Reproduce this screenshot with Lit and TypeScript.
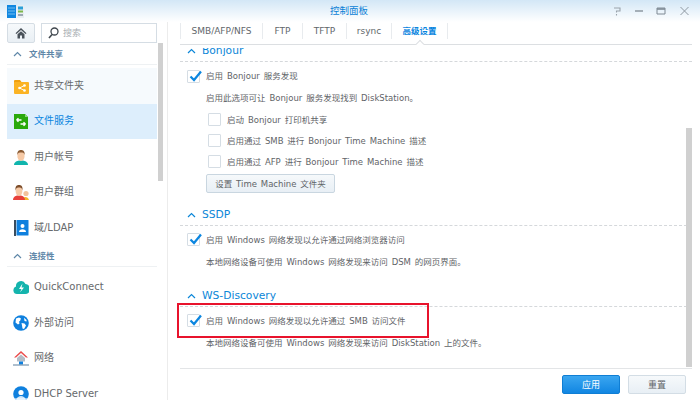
import { LitElement, html, css, svg } from "lit";
import { customElement } from "lit/decorators.js";

const icons: Record<string, unknown> = {
  share: svg`<path d="M1 3a1 1 0 0 1 1-1h5l1.500 2H14a1 1 0 0 1 1 1v10H1z" fill="#f0a010"/><rect x="1" y="4" width="15" height="12" rx="1" fill="#fbb324"/><circle cx="6.500" cy="10" r="1.300" fill="#fff"/><circle cx="11.500" cy="7.500" r="1.300" fill="#fff"/><circle cx="11.500" cy="12.500" r="1.300" fill="#fff"/><path d="M6.500 10l5-2.500M6.500 10l5 2.500" stroke="#fff" stroke-width=".9"/>`,
  file: svg`<path d="M1 1h11l3 3v12H1z" fill="#2aa90c"/><path d="M12 1l3 3h-3z" fill="#8ed67a"/><path d="M3.500 7h5M3.500 7l2-1.800M3.500 7l2 1.800M12.500 11h-5M12.500 11l-2-1.800M12.500 11l-2 1.800" stroke="#fff" stroke-width="1.400" fill="none"/>`,
  user: svg`<path d="M1 16c0-3 3-4 5-4.500h4c2 .5 5 1.500 5 4.500z" fill="#10b5ad"/><ellipse cx="8" cy="7" rx="3.600" ry="5" fill="#f6c9a5"/><path d="M4.300 6C4 2 6 1 8 1s4 1 3.700 5C11 3.500 9.500 3.500 8 3.500S5 3.500 4.300 6z" fill="#8a5a32"/>`,
  group: svg`<path d="M9 16c0-2 2-3 3.500-3s3 1 3.500 3z" fill="#f5b52a"/><circle cx="13" cy="9.500" r="2.600" fill="#f3c39d"/><path d="M0 16c0-3 2.500-4 4-4.500h4c1.500.5 4 1.500 4 4.500z" fill="#e8403a"/><ellipse cx="6" cy="7" rx="3.400" ry="4.800" fill="#f6c9a5"/><path d="M2.500 6.500C2 2 4 1 6 1s4 1 3.500 5.500C9 3.800 7.500 3.600 6 3.600S3 3.800 2.500 6.500z" fill="#7d4d2a"/>`,
  domain: svg`<rect x="1" y="0" width="2" height="16" fill="#3a4c5e"/><rect x="3.500" y="0" width="12" height="15.500" rx=".5" fill="#0f80de"/><circle cx="9.500" cy="6" r="2" fill="#fff"/><path d="M6 12c0-2 1.500-2.800 3.500-2.800S13 10 13 12z" fill="#fff"/>`,
  cloud: svg`<path d="M4 15a3.800 3.800 0 0 1-1-7.400A5 5 0 0 1 12.500 5 4.700 4.700 0 0 1 12 15z" fill="#14b4ad"/><path d="M9.500 4.500L6 10h2.500L7 13.500 11 8.500H8.500z" fill="#fff"/>`,
  globe: svg`<circle cx="8" cy="8" r="7.800" fill="#0f80de"/><path d="M3 3.500l3-1 2 1-1 2.500-1 .5.500 2L5 9.500 2.500 7.500zM8.500 8l3 .5 1.500 2-2 3.500-1.500-.5-.5-3zM11 2.800l2.500 2.200v1.500L11.500 6z" fill="#fff"/>`,
  net: svg`<path d="M8 1L1 7.500h2L8 3l5 4.500h2z" fill="#ea4b4b"/><path d="M4 8l4-3.500L12 8v3.500H4z" fill="#b3bcc6"/><rect x="6" y="11.500" width="4" height="3" fill="#0f80de"/><path d="M0 15h16" stroke="#5d7f9c" stroke-width="1"/>`,
  dhcp: svg`<circle cx="8" cy="8" r="7.800" fill="#0f80de"/><circle cx="8" cy="6.500" r="2.600" fill="#fff"/><path d="M3 14c1-3 3-4 5-4s4 1 5 4z" fill="#cfe6fa"/><path d="M2 13h12" stroke="#fff"/>`,
};

const nav = [
  { t: "h", l: "文件共享" },
  { t: "i", l: "共享文件夹", i: "share" },
  { t: "i", l: "文件服务", i: "file", on: true },
  { t: "i", l: "用户帐号", i: "user" },
  { t: "i", l: "用户群组", i: "group" },
  { t: "i", l: "域/LDAP", i: "domain" },
  { t: "h", l: "连接性" },
  { t: "i", l: "QuickConnect", i: "cloud" },
  { t: "i", l: "外部访问", i: "globe" },
  { t: "i", l: "网络", i: "net" },
  { t: "i", l: "DHCP Server", i: "dhcp" },
];

const tabs = ["SMB/AFP/NFS", "FTP", "TFTP", "rsync", "高级设置"];

@customElement("app-root")
export class AppRoot extends LitElement {
  static styles = css`
    :host { display: block; width: 700px; height: 400px; overflow: hidden; }
    * { box-sizing: border-box; }
    .win { position: relative; width: 700px; height: 400px; background: #fff; display: flex; flex-direction: column; color: #5f6468;
      font: 8.500px/14px "DejaVu Sans", "Noto Sans CJK SC", sans-serif; word-spacing: 1.200px; }
    .bar { flex: none; height: 22px; display: grid; grid-template-columns: 1fr auto 1fr; align-items: center; padding: 0 9px 0 7px;
      background: linear-gradient(#d3e7f6, #ffffff); }
    .title { color: #0b7fd6; font-size: 9.500px; }
    .logo { display: block; }
    .ctl { justify-self: end; display: flex; align-items: center; margin-right: 1px; }
    .c1 { margin-left: 12px; } .c2 { margin-left: 10px; } .c3 { margin-left: 12px; }
    .main { flex: 1; display: flex; min-height: 0; }
    .side { flex: none; width: 168px; padding-left: 7px; display: flex; border-right: 1px solid #ececec; }
    .col { flex: none; width: 150px; display: flex; flex-direction: column; overflow: hidden; }
    .tools { flex: none; display: flex; gap: 6px; height: 21px; margin-top: 1px; }
    .home { width: 28px; height: 20px; border: 1px solid #d5dde4; border-radius: 2px; background: linear-gradient(#f6f9fb, #e9eff4); display: flex; align-items: center; justify-content: center; }
    .search { width: 116px; height: 20px; border: 1px solid #d5dde4; display: flex; align-items: center; gap: 4px; padding-left: 6px; color: #a9afb4; font-size: 9px; }
    .shead { flex: none; height: 21px; display: flex; align-items: center; gap: 7px; padding-left: 6px; color: #5f87a8; font-weight: 700; font-size: 8.500px; border-bottom: 1px solid #eef1f3; }
    .shead.gap { height: 21.500px; padding-top: 1px; }
    .item { flex: none; height: 35.500px; display: flex; align-items: center; gap: 5px; padding-left: 6px; font-size: 10px; color: #66696c; word-spacing: 0; }
    .item.on { background: #ddeefc; color: #0b86e0; }
    .item svg { flex: none; }
    .item.first { margin-top: 3px; background: #f6fafd; }
    .item.after { margin-top: 2.500px; }
    .rail { flex: none; width: 5px; margin-left: 1px; }
    .thumb { width: 5px; height: 138px; margin-top: 21px; background: #d0d0d0; }
    .pane { flex: 1; min-width: 0; display: flex; flex-direction: column; padding-left: 12px; padding-right: 8px; }
    .tabs { flex: none; height: 23px; display: flex; border-bottom: 1px solid #dcdfe2; margin-bottom: 3px; }
    .tab { height: 16px; margin-top: 1px; display: flex; align-items: center; justify-content: center; border-left: 1px solid #e8ebee; color: #62676b; font-size: 9px; word-spacing: 0; position: relative; }
    .tab:last-child { border-right: 1px solid #e8ebee; }
    .tab.on { color: #0b86e0; font-weight: 700; font-size: 8.500px; }
    .notch { position: absolute; left: 50%; top: 18px; width: 6px; height: 6px; margin-left: -3px; background: #fff; border-top: 1px solid #dcdfe2; border-left: 1px solid #dcdfe2; transform: rotate(45deg); }
    .scroll { flex: 1; min-height: 0; overflow: hidden; display: flex; }
    .content { flex: 1; min-width: 0; display: flex; flex-direction: column; margin-top: -5px; }
    .srail { flex: none; width: 6px; padding-top: 80px; }
    .sthumb { width: 6px; height: 239px; background: #d0d0d0; }
    .sec { flex: none; height: 16px; display: flex; align-items: center; gap: 6px; padding-left: 7px; color: #0b86d8; font-size: 10.700px; line-height: 16px; word-spacing: 0; }
    .dash { flex: none; margin: 2px -6px 0 0; border: 0; border-top: 1px dashed #d5d8db; }
    .row { flex: none; display: flex; align-items: center; height: 14px; gap: 6px; padding-left: 7px; }
    .row.sub { padding-left: 28px; }
    .desc { flex: none; padding-left: 26px; height: 14px; }
    .cb { flex: none; width: 13px; height: 13px; border: 1px solid #d5dde4; border-radius: 1px; background: #fff; position: relative; }
    .cb svg { position: absolute; left: 0; top: -2px; }
    .btn { flex: none; width: 129px; height: 19px; margin-left: 26px; border: 1px solid #c9d6e0; border-radius: 2px; background: linear-gradient(#f6f9fb, #e8eff5); display: flex; align-items: center; justify-content: center; }
    .foot { flex: none; height: 32px; border-top: 1px solid #e3e5e7; display: flex; justify-content: flex-end; gap: 8px; padding: 6px 6px 0 0; }
    .fb { width: 58px; height: 19px; border-radius: 2px; display: flex; align-items: center; justify-content: center; font-size: 9px; }
    .apply { background: linear-gradient(#3ba6f0, #1186e2); border: 1px solid #0f7ed4; color: #fff; }
    .reset { background: linear-gradient(#f6f9fb, #e8eff5); border: 1px solid #d3dde5; }
    .mark { position: absolute; left: 177px; top: 303px; width: 252px; height: 35px; border: 2px solid #e8132c; pointer-events: none; }
    .s55 { flex: none; height: 5.500px; } .s65 { flex: none; height: 6.500px; } .s7 { flex: none; height: 7px; }
    .s75 { flex: none; height: 7.500px; } .s8 { flex: none; height: 8px; } .s85 { flex: none; height: 8.500px; }
    .s14 { flex: none; height: 14px; } .s18 { flex: none; height: 19px; }
  `;

  private check() {
    return html`<span class="cb"><svg width="15" height="14" viewBox="0 0 15 14"><path d="M2.500 7.500L6 11 13 2.500" fill="none" stroke="#0b86e0" stroke-width="2.200"/></svg></span>`;
  }

  private chev(c: string) {
    return html`<svg width="9" height="6" viewBox="0 0 9 6" style="flex:none"><path d="M1 5l3.500-3.500L8 5" fill="none" stroke="${c}" stroke-width="1.200"/></svg>`;
  }

  render() {
    const widths = [82, 40, 44, 45, 57];
    return html`<div class="win">
      <div class="bar">
        <svg class="logo" width="17" height="13" viewBox="0 0 17 13">
          <rect width="9" height="13" fill="#1087e0"/><path d="M1 3h7M1 6h7M1 9h7" stroke="#8ccaf5" stroke-width=".8"/>
          <rect x="10" width="7" height="13" fill="#e8eef2"/><rect x="11" y="1.500" width="5" height="3" fill="#2aa0d8"/><rect x="11" y="5.500" width="5" height="2" fill="#7bb84a"/><rect x="11" y="9" width="5" height="2" fill="#9aa8b3"/>
        </svg>
        <span class="title">控制面板</span>
        <div class="ctl">
          <svg width="8" height="10" viewBox="0 0 8 10"><path d="M1 2h6v3H3.500v1.500M3.500 8v1.500" fill="none" stroke="#9aa3ab" stroke-width="1.100"/></svg>
          <svg class="c1" width="12" height="10" viewBox="0 0 12 10"><path d="M2 5h8" stroke="#7f8a94" stroke-width="1.300"/></svg>
          <svg class="c2" width="12" height="10" viewBox="0 0 12 10"><path d="M2 2h8v6H2z" fill="none" stroke="#7f8a94"/><path d="M2 3h8" stroke="#7f8a94" stroke-width="1.600"/></svg>
          <svg class="c3" width="11" height="10" viewBox="0 0 11 10"><path d="M1.500 1l8 8M9.500 1l-8 8" stroke="#8e98a1" stroke-width="1"/></svg>
        </div>
      </div>
      <div class="main">
        <div class="side">
          <div class="col">
            <div class="tools">
              <div class="home"><svg width="12" height="12" viewBox="0 0 12 12"><path d="M6 1L0.500 6.200l1 .8L6 3l4.500 4 1-.8z" fill="#4a525a"/><path d="M2.500 7.200L6 4.200l3.500 3V11.500H7V8.500H5v3H2.500z" fill="#4a525a"/></svg></div>
              <div class="search"><svg width="11" height="12" viewBox="0 0 11 12"><circle cx="6.500" cy="4.500" r="3.500" fill="none" stroke="#3f474e" stroke-width="1.300"/><path d="M4 7.500L1 11" stroke="#3f474e" stroke-width="1.600"/></svg><span>搜索</span></div>
            </div>
            ${nav.map((n, i) =>
              n.t === "h"
                ? html`<div class="shead ${i ? "gap" : ""}">${this.chev("#5f87a8")}<span>${n.l}</span></div>`
                : html`<div class="item ${n.on ? "on" : ""} ${i === 1 ? "first" : ""} ${i === 7 ? "after" : ""}"><svg width="16" height="16" viewBox="0 0 16 16">${icons[n.i as string]}</svg><span>${n.l}</span></div>`
            )}
          </div>
          <div class="rail"><div class="thumb"></div></div>
        </div>
        <div class="pane">
          <div class="tabs">
            ${tabs.map((t, i) => html`<div class="tab ${i === 4 ? "on" : ""}" style="width:${widths[i]}px">${t}${i === 4 ? html`<span class="notch"></span>` : ""}</div>`)}
          </div>
          <div class="scroll">
            <div class="content">
              <div class="sec">${this.chev("#0b86d8")}<span>Bonjour</span></div>
              <hr class="dash" />
              <div class="s7"></div>
              <div class="row">${this.check()}<span>启用 Bonjour 服务发现</span></div>
              <div class="s8"></div>
              <div class="desc">启用此选项可让 Bonjour 服务发现找到 DiskStation。</div>
              <div class="s75"></div>
              <div class="row sub"><span class="cb"></span><span>启动 Bonjour 打印机共享</span></div>
              <div class="s7"></div>
              <div class="row sub"><span class="cb"></span><span>启用通过 SMB 进行 Bonjour Time Machine 描述</span></div>
              <div class="s7"></div>
              <div class="row sub"><span class="cb"></span><span>启用通过 AFP 进行 Bonjour Time Machine 描述</span></div>
              <div class="s55"></div>
              <div class="btn">设置 Time Machine 文件夹</div>
              <div class="s14"></div>
              <div class="sec">${this.chev("#0b86d8")}<span>SSDP</span></div>
              <hr class="dash" />
              <div class="s65"></div>
              <div class="row">${this.check()}<span>启用 Windows 网络发现以允许通过网络浏览器访问</span></div>
              <div class="s85"></div>
              <div class="desc">本地网络设备可使用 Windows 网络发现来访问 DSM 的网页界面。</div>
              <div class="s18"></div>
              <div class="sec">${this.chev("#0b86d8")}<span>WS-Discovery</span></div>
              <hr class="dash" />
              <div class="s65"></div>
              <div class="row">${this.check()}<span>启用 Windows 网络发现以允许通过 SMB 访问文件</span></div>
              <div class="s85"></div>
              <div class="desc">本地网络设备可使用 Windows 网络发现来访问 DiskStation 上的文件。</div>
            </div>
            <div class="srail"><div class="sthumb"></div></div>
          </div>
          <div class="foot">
            <div class="fb apply">应用</div>
            <div class="fb reset">重置</div>
          </div>
        </div>
      </div>
      <div class="mark"></div>
    </div>`;
  }
}
